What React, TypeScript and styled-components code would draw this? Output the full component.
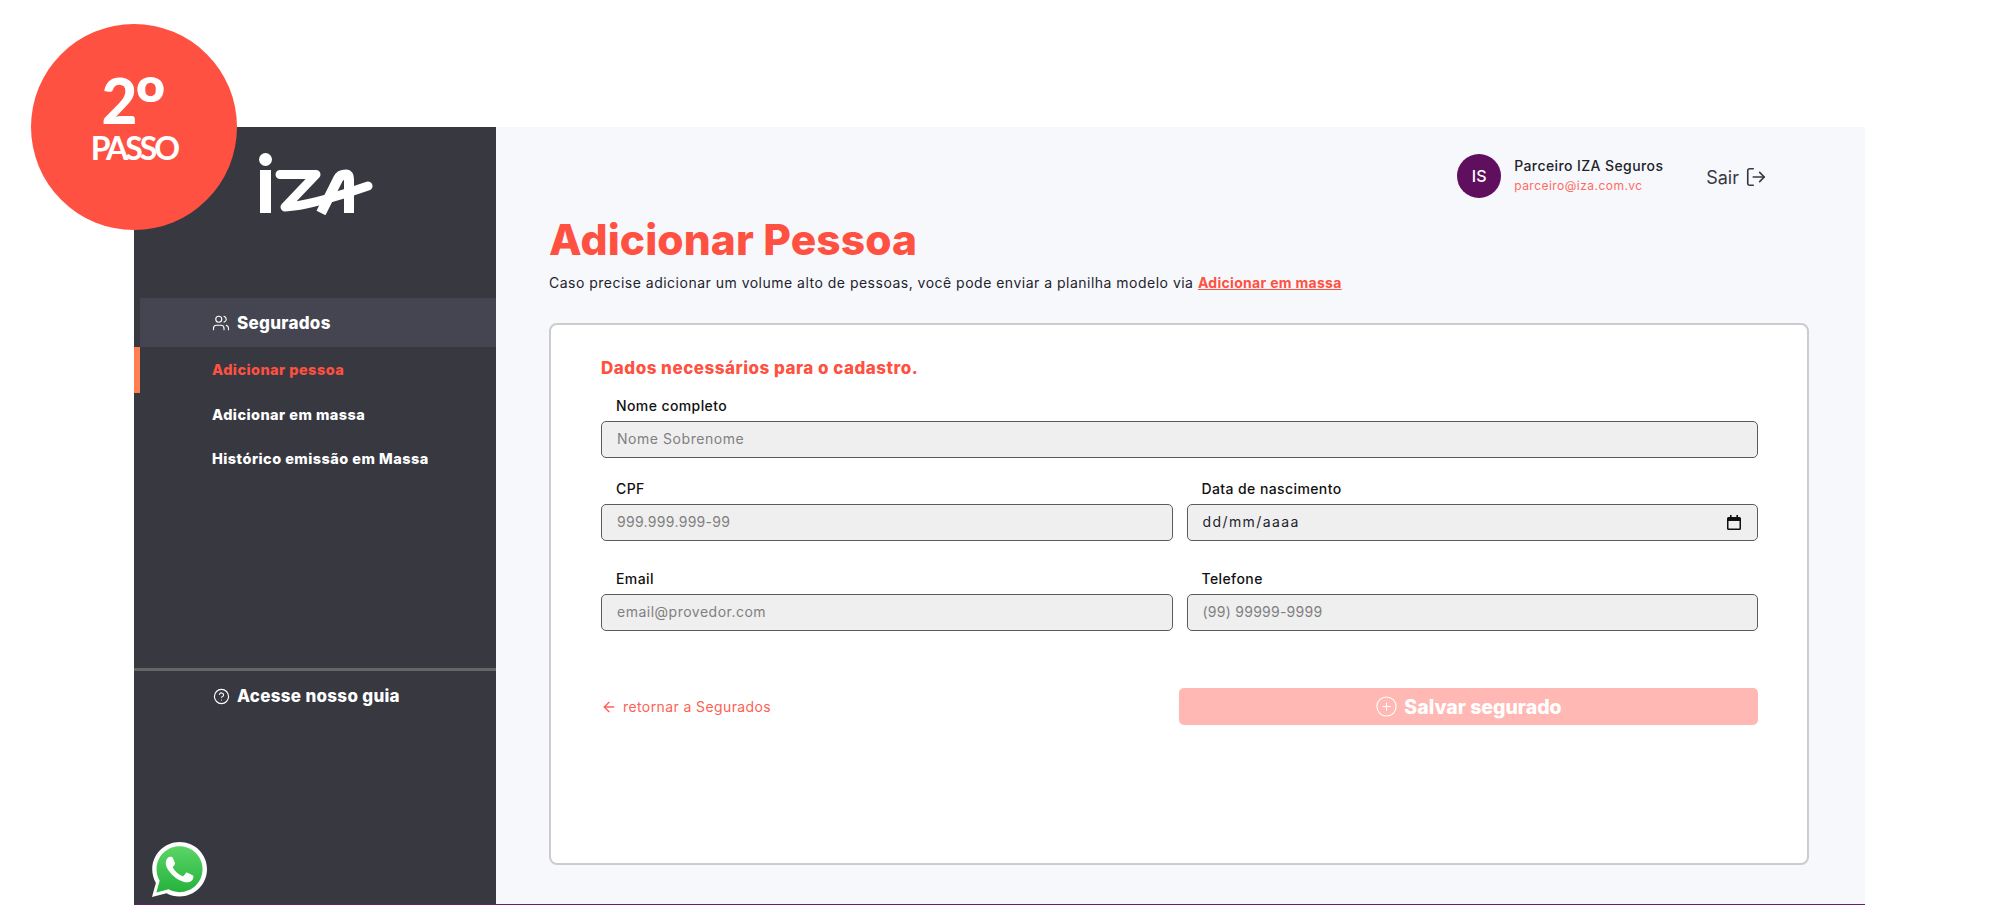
import React from 'react';
import styled, { createGlobalStyle } from 'styled-components';
import { LogOut, Users, CircleHelp, CirclePlus, ArrowLeft } from 'lucide-react';

const GlobalStyle = createGlobalStyle`
  * { box-sizing: border-box; }
  html, body { margin: 0; padding: 0; background: #fff; }
  body { font-family: "Inter", "Liberation Sans", sans-serif; }
`;

const Page = styled.div`
  position: relative;
  height: 905px;
  padding: 127px 135px 0 134px;
  overflow: hidden;
`;

const Badge = styled.div`
  position: absolute;
  left: 31px;
  top: 24px;
  width: 206px;
  height: 206px;
  border-radius: 50%;
  background: #ff5142;
  color: #fff;
  font-family: "Lato", sans-serif;
  font-weight: 700;
  text-align: center;
  z-index: 2;
`;

const BadgeNumber = styled.div`
  display: flex;
  justify-content: center;
  height: 64px;
  margin-top: 44px;
  font-size: 62px;
  font-weight: 900;
  line-height: 64px;
`;

const BadgeOrdinal = styled.span`
  font-size: 80px;
  font-weight: 700;
  line-height: 64px;
  margin: 4px 0 0 -3px;
`;

const BadgeLabel = styled.div`
  font-size: 32px;
  line-height: 32px;
  letter-spacing: -3px;
`;

const Frame = styled.div`
  display: flex;
  height: 778px;
  border-bottom: 1px solid #6a1b6e;
`;

const Sidebar = styled.aside`
  position: relative;
  width: 362px;
  flex-shrink: 0;
  background: #383841;
  color: #fff;
  display: flex;
  flex-direction: column;
  padding-top: 26px;
`;

const LogoBox = styled.div`
  padding-left: 125px;
  height: 145px;
`;

const GroupHead = styled.div`
  display: flex;
  align-items: center;
  gap: 7px;
  height: 49px;
  margin-left: 6px;
  padding-left: 72px;
  background: #444550;
  font-size: 17px;
  font-weight: 800;
  letter-spacing: 0.3px;
`;

const NavItem = styled.div<{ $active?: boolean; $height: number }>`
  display: flex;
  align-items: center;
  height: ${p => p.$height}px;
  padding-left: ${p => (p.$active ? 72 : 78)}px;
  padding-bottom: ${p => (p.$active ? 2 : 0)}px;
  border-left: ${p => (p.$active ? '6px solid #ff7f50' : 'none')};
  color: ${p => (p.$active ? '#ff5142' : '#fff')};
  font-size: 14.5px;
  font-weight: 800;
  letter-spacing: 0.45px;
`;

const Divider = styled.div`
  height: 3px;
  background: #666;
  margin-top: 188px;
`;

const GuideRow = styled.div`
  display: flex;
  align-items: center;
  gap: 7px;
  padding: 15px 0 0 79px;
  font-size: 17px;
  font-weight: 800;
  letter-spacing: 0.3px;
`;

const WhatsApp = styled.svg`
  position: absolute;
  left: 18px;
  bottom: 7px;
  width: 55px;
  height: 55px;
`;

const Main = styled.main`
  flex: 1;
  background: #f7f8fc;
  padding: 27px 56px 0 53px;
`;

const TopBar = styled.div`
  display: flex;
  align-items: center;
  justify-content: flex-end;
  height: 44px;
  padding-right: 42px;
`;

const Avatar = styled.div`
  width: 44px;
  height: 44px;
  border-radius: 50%;
  background: #5f0f5e;
  color: #fff;
  display: flex;
  align-items: center;
  justify-content: center;
  font-size: 16px;
  font-weight: 500;
`;

const UserInfo = styled.div`
  margin-left: 13px;
  width: 192px;
`;

const UserName = styled.div`
  font-size: 14px;
  line-height: 20px;
  font-weight: 500;
  letter-spacing: 0.4px;
  color: #23232b;
`;

const UserMail = styled.div`
  font-size: 12px;
  line-height: 20px;
  letter-spacing: 0.47px;
  color: #ff6b60;
`;

const Logout = styled.div`
  display: flex;
  align-items: center;
  gap: 6px;
  padding-top: 2px;
  font-size: 18px;
  color: #383841;
`;

const Title = styled.h1`
  margin: 18px 0 0 0;
  font-size: 42.5px;
  line-height: 48px;
  font-weight: 800;
  letter-spacing: 0.1px;
  color: #ff5142;
`;

const Intro = styled.p`
  margin: 9px 0 0 0;
  font-size: 14px;
  line-height: 20px;
  letter-spacing: 0.49px;
  color: #23232b;

  a {
    color: #ff5142;
    font-weight: 700;
    letter-spacing: 0.3px;
    text-decoration: underline;
  }
`;

const Card = styled.section`
  margin-top: 30px;
  height: 542px;
  background: #fff;
  border: 2px solid #ccc;
  border-radius: 8px;
  padding: 33px 49px 0 50px;
`;

const CardTitle = styled.h2`
  margin: 0;
  font-size: 17px;
  line-height: 20px;
  font-weight: 800;
  letter-spacing: 0.5px;
  color: #ff5142;
`;

const Row = styled.div<{ $cols: number; $top: number }>`
  display: grid;
  grid-template-columns: repeat(${p => p.$cols}, 1fr);
  column-gap: 14px;
  margin-top: ${p => p.$top}px;
`;

const Field = styled.label`
  display: block;
`;

const FieldLabel = styled.div`
  height: 20px;
  padding-left: 15px;
  margin-bottom: 5px;
  font-size: 14px;
  line-height: 20px;
  font-weight: 450;
  letter-spacing: 0.4px;
  color: #111;
`;

const InputWrap = styled.div`
  position: relative;
`;

const Input = styled.input<{ $track?: number }>`
  display: block;
  width: 100%;
  height: 37px;
  padding: 0 15px 2px;
  background: #efefef;
  border: 1px solid #5a5a63;
  border-radius: 5px;
  font-family: inherit;
  font-size: 14px;
  letter-spacing: ${p => p.$track ?? 0.45}px;
  color: #23232b;
  outline: none;

  &::placeholder {
    color: #808080;
  }
`;

const CalendarIcon = styled.svg`
  position: absolute;
  right: 17px;
  top: 11px;
  width: 14px;
  height: 15px;
`;

const Footer = styled.div`
  display: flex;
  align-items: center;
  justify-content: space-between;
  margin-top: 57px;
`;

const BackLink = styled.a`
  display: flex;
  align-items: center;
  gap: 6px;
  font-size: 14px;
  letter-spacing: 0.4px;
  color: #ff5f54;
`;

const SaveButton = styled.button`
  display: flex;
  align-items: center;
  justify-content: center;
  gap: 6px;
  width: 579px;
  height: 37px;
  border: none;
  border-radius: 5px;
  background: #ffb8b3;
  color: #fff;
  font-family: inherit;
  font-size: 19.5px;
  font-weight: 800;
`;

const App: React.FC = () => {
  return (
    <Page>
      <GlobalStyle />
      <Badge>
        <BadgeNumber>2<BadgeOrdinal>º</BadgeOrdinal></BadgeNumber>
        <BadgeLabel>PASSO</BadgeLabel>
      </Badge>
      <Frame>
        <Sidebar>
          <LogoBox>
            <svg width="114" height="62" viewBox="0 0 114 62" fill="none">
              <circle cx="6.500" cy="6.500" r="6.500" fill="#fff" />
              <rect x="1" y="17" width="11" height="43" fill="#fff" />
              <path d="M21 21.500 H57 L26 54 C45 53 80 43 109 33" stroke="#fff" strokeWidth="9" strokeLinecap="round" strokeLinejoin="round" />
              <path d="M62 60 L79 26 Q81 21.500 87 21.500 Q90 21.500 90 26 V60" stroke="#fff" strokeWidth="10" />
            </svg>
          </LogoBox>
          <GroupHead>
            <Users size={18} strokeWidth={1.5} />
            Segurados
          </GroupHead>
          <NavItem $active $height={46}>Adicionar pessoa</NavItem>
          <NavItem $height={43}>Adicionar em massa</NavItem>
          <NavItem $height={44}>Histórico emissão em Massa</NavItem>
          <Divider />
          <GuideRow>
            <CircleHelp size={17} strokeWidth={1.6} />
            Acesse nosso guia
          </GuideRow>
          <WhatsApp viewBox="0 0 24 24">
            <defs>
              <linearGradient id="wa" x1="0" y1="0" x2="0" y2="1">
                <stop offset="0" stopColor="#5bd566" />
                <stop offset="1" stopColor="#25b23c" />
              </linearGradient>
            </defs>
            <path fill="#fff" d="M20.52 3.449C18.24 1.245 15.24 0 12.045 0 5.463 0 .104 5.334.101 11.893c0 2.096.549 4.14 1.595 5.945L0 24l6.335-1.652c1.746.943 3.71 1.444 5.71 1.447h.006c6.585 0 11.946-5.336 11.949-11.896 0-3.176-1.24-6.165-3.495-8.411z" />
            <path fill="url(#wa)" transform="translate(1.900 1.900) scale(0.84)" d="M20.52 3.449C18.24 1.245 15.24 0 12.045 0 5.463 0 .104 5.334.101 11.893c0 2.096.549 4.14 1.595 5.945L0 24l6.335-1.652c1.746.943 3.71 1.444 5.71 1.447h.006c6.585 0 11.946-5.336 11.949-11.896 0-3.176-1.24-6.165-3.495-8.411z" />
            <path fill="#fff" d="M17.472 14.382c-.297-.149-1.758-.867-2.03-.967-.273-.099-.471-.148-.67.15-.197.297-.767.966-.94 1.164-.173.199-.347.223-.644.075-.297-.15-1.255-.463-2.39-1.475-.883-.788-1.48-1.761-1.653-2.059-.173-.297-.018-.458.13-.606.134-.133.298-.347.446-.52.149-.174.198-.298.298-.497.099-.198.05-.371-.025-.52-.075-.149-.669-1.612-.916-2.207-.242-.579-.487-.5-.669-.51-.173-.008-.371-.01-.57-.01-.198 0-.52.074-.792.372-.272.297-1.04 1.016-1.04 2.479 0 1.462 1.065 2.875 1.213 3.074.149.198 2.096 3.2 5.077 4.487.709.306 1.262.489 1.694.625.712.227 1.36.195 1.871.118.571-.085 1.758-.719 2.006-1.413.248-.694.248-1.289.173-1.413-.074-.124-.272-.198-.57-.347z" />
          </WhatsApp>
        </Sidebar>
        <Main>
          <TopBar>
            <Avatar>IS</Avatar>
            <UserInfo>
              <UserName>Parceiro IZA Seguros</UserName>
              <UserMail>parceiro@iza.com.vc</UserMail>
            </UserInfo>
            <Logout>
              Sair
              <LogOut size={22} strokeWidth={1.8} />
            </Logout>
          </TopBar>
          <Title>Adicionar Pessoa</Title>
          <Intro>
            Caso precise adicionar um volume alto de pessoas, você pode enviar a planilha modelo via <a>Adicionar em massa</a>
          </Intro>
          <Card>
            <CardTitle>Dados necessários para o cadastro.</CardTitle>
            <Row $cols={1} $top={18}>
              <Field>
                <FieldLabel>Nome completo</FieldLabel>
                <Input placeholder="Nome Sobrenome" $track={0.55} />
              </Field>
            </Row>
            <Row $cols={2} $top={21}>
              <Field>
                <FieldLabel>CPF</FieldLabel>
                <Input placeholder="999.999.999-99" $track={0.3} />
              </Field>
              <Field>
                <FieldLabel>Data de nascimento</FieldLabel>
                <InputWrap>
                  <Input defaultValue="dd/mm/aaaa" $track={1.4} />
                  <CalendarIcon viewBox="0 0 14 15">
                    <path fill="#111" d="M3 0h1.6v2h4.8V0H11v2h1.5A1.5 1.5 0 0 1 14 3.500v10a1.500 1.500 0 0 1-1.500 1.500h-11A1.500 1.500 0 0 1 0 13.500v-10A1.500 1.500 0 0 1 1.500 2H3V0zM1.500 6v7.500h11V6h-11z" />
                  </CalendarIcon>
                </InputWrap>
              </Field>
            </Row>
            <Row $cols={2} $top={28}>
              <Field>
                <FieldLabel>Email</FieldLabel>
                <Input placeholder="email@provedor.com" $track={0.5} />
              </Field>
              <Field>
                <FieldLabel>Telefone</FieldLabel>
                <Input placeholder="(99) 99999-9999" $track={0.25} />
              </Field>
            </Row>
            <Footer>
              <BackLink>
                <ArrowLeft size={16} strokeWidth={2} />
                retornar a Segurados
              </BackLink>
              <SaveButton>
                <CirclePlus size={23} strokeWidth={1.1} />
                Salvar segurado
              </SaveButton>
            </Footer>
          </Card>
        </Main>
      </Frame>
    </Page>
  );
};

export default App;
